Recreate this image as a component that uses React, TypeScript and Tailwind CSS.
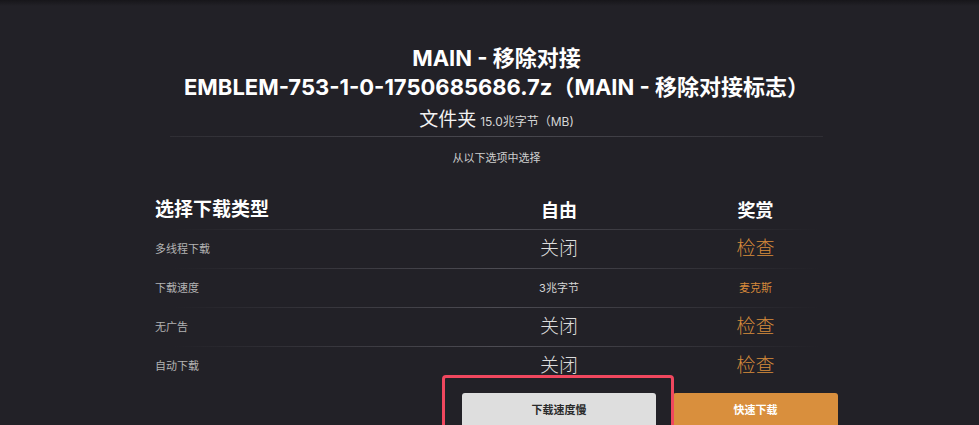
const rows = [
  { label: '多线程下载', free: '关闭', premium: '检查', small: false },
  { label: '下载速度', free: '3兆字节', premium: '麦克斯', small: true },
  { label: '无广告', free: '关闭', premium: '检查', small: false },
  { label: '自动下载', free: '关闭', premium: '检查', small: false },
]

const font = "font-['Inter','Noto_Sans_CJK_SC',sans-serif]"

function Divider() {
  return <div className="mx-[18px] h-px bg-gradient-to-r from-transparent via-[#4d4c53] to-transparent" />
}

export default function App() {
  return (
    <div className={`h-[425px] w-[979px] overflow-hidden bg-[#222127] ${font}`}>
      <div className="h-[6px] bg-gradient-to-b from-[#17161a] to-[#222127]" />
      <div className="pl-[155px]">
        <div className="w-[683px]">
          <div className="mt-[38px] text-center text-[22px] font-bold leading-[29px] text-white">
            <div>MAIN - 移除对接</div>
            <div>EMBLEM-753-1-0-1750685686.7z（MAIN - 移除对接标志）</div>
          </div>
          <div className="mt-[5px] flex items-baseline justify-center gap-[4px] leading-[26px]">
            <span className="text-[19px] text-[#f2f2f2]">文件夹</span>
            <span className="text-[12px] text-[#d6d6d6]">15.0兆字节（MB)</span>
          </div>
          <div className="mx-[15px] mt-[1px] h-px bg-gradient-to-r from-[#2f2e34] via-[#4a4950] to-[#2f2e34]" />
          <div className="mt-[13px] text-center text-[11px] leading-[16px] text-[#cfcfcf]">从以下选项中选择</div>

          <div className="mt-[25px]">
            <div className="grid h-[38px] grid-cols-[290px_194px_165px] items-center gap-x-[17px] text-[18px] font-bold text-white">
              <div className="text-[19px]">选择下载类型</div>
              <div className="text-center">自由</div>
              <div className="text-center">奖赏</div>
            </div>
            <Divider />
            {rows.map((r, i) => (
              <div key={r.label}>
                <div className="grid h-[38px] grid-cols-[290px_194px_165px] items-center gap-x-[17px]">
                  <div className="text-[11px] text-[#b3b3b3]">{r.label}</div>
                  <div className={r.small ? 'text-center text-[11px] text-[#d6d6d6]' : 'text-center text-[19px] font-light text-[#dcdcdc]'}>
                    {r.free}
                  </div>
                  <div className={r.small ? 'text-center text-[11px] text-[#d4883a]' : 'text-center text-[19px] font-light text-[#d88c3b]'}>
                    {r.premium}
                  </div>
                </div>
                {i < rows.length - 1 && <Divider />}
              </div>
            ))}
          </div>

          <div className="mt-[8px] grid grid-cols-[290px_194px_165px] gap-x-[17px]">
            <div />
            <div className="relative">
              <div className="pointer-events-none absolute -top-[18px] -left-[20px] -right-[18px] h-[80px] rounded-[4px] border-[3px] border-[#f0475e]" />
              <button className="flex h-[34px] w-full items-center justify-center rounded-[3px] bg-[#dedede] text-[11px] font-bold text-[#2a2a2a]">
                下载速度慢
              </button>
            </div>
            <button className="flex h-[34px] w-full items-center justify-center rounded-[3px] bg-[#d98f3d] text-[11px] font-bold text-white">
              快速下载
            </button>
          </div>
        </div>
      </div>
    </div>
  )
}
